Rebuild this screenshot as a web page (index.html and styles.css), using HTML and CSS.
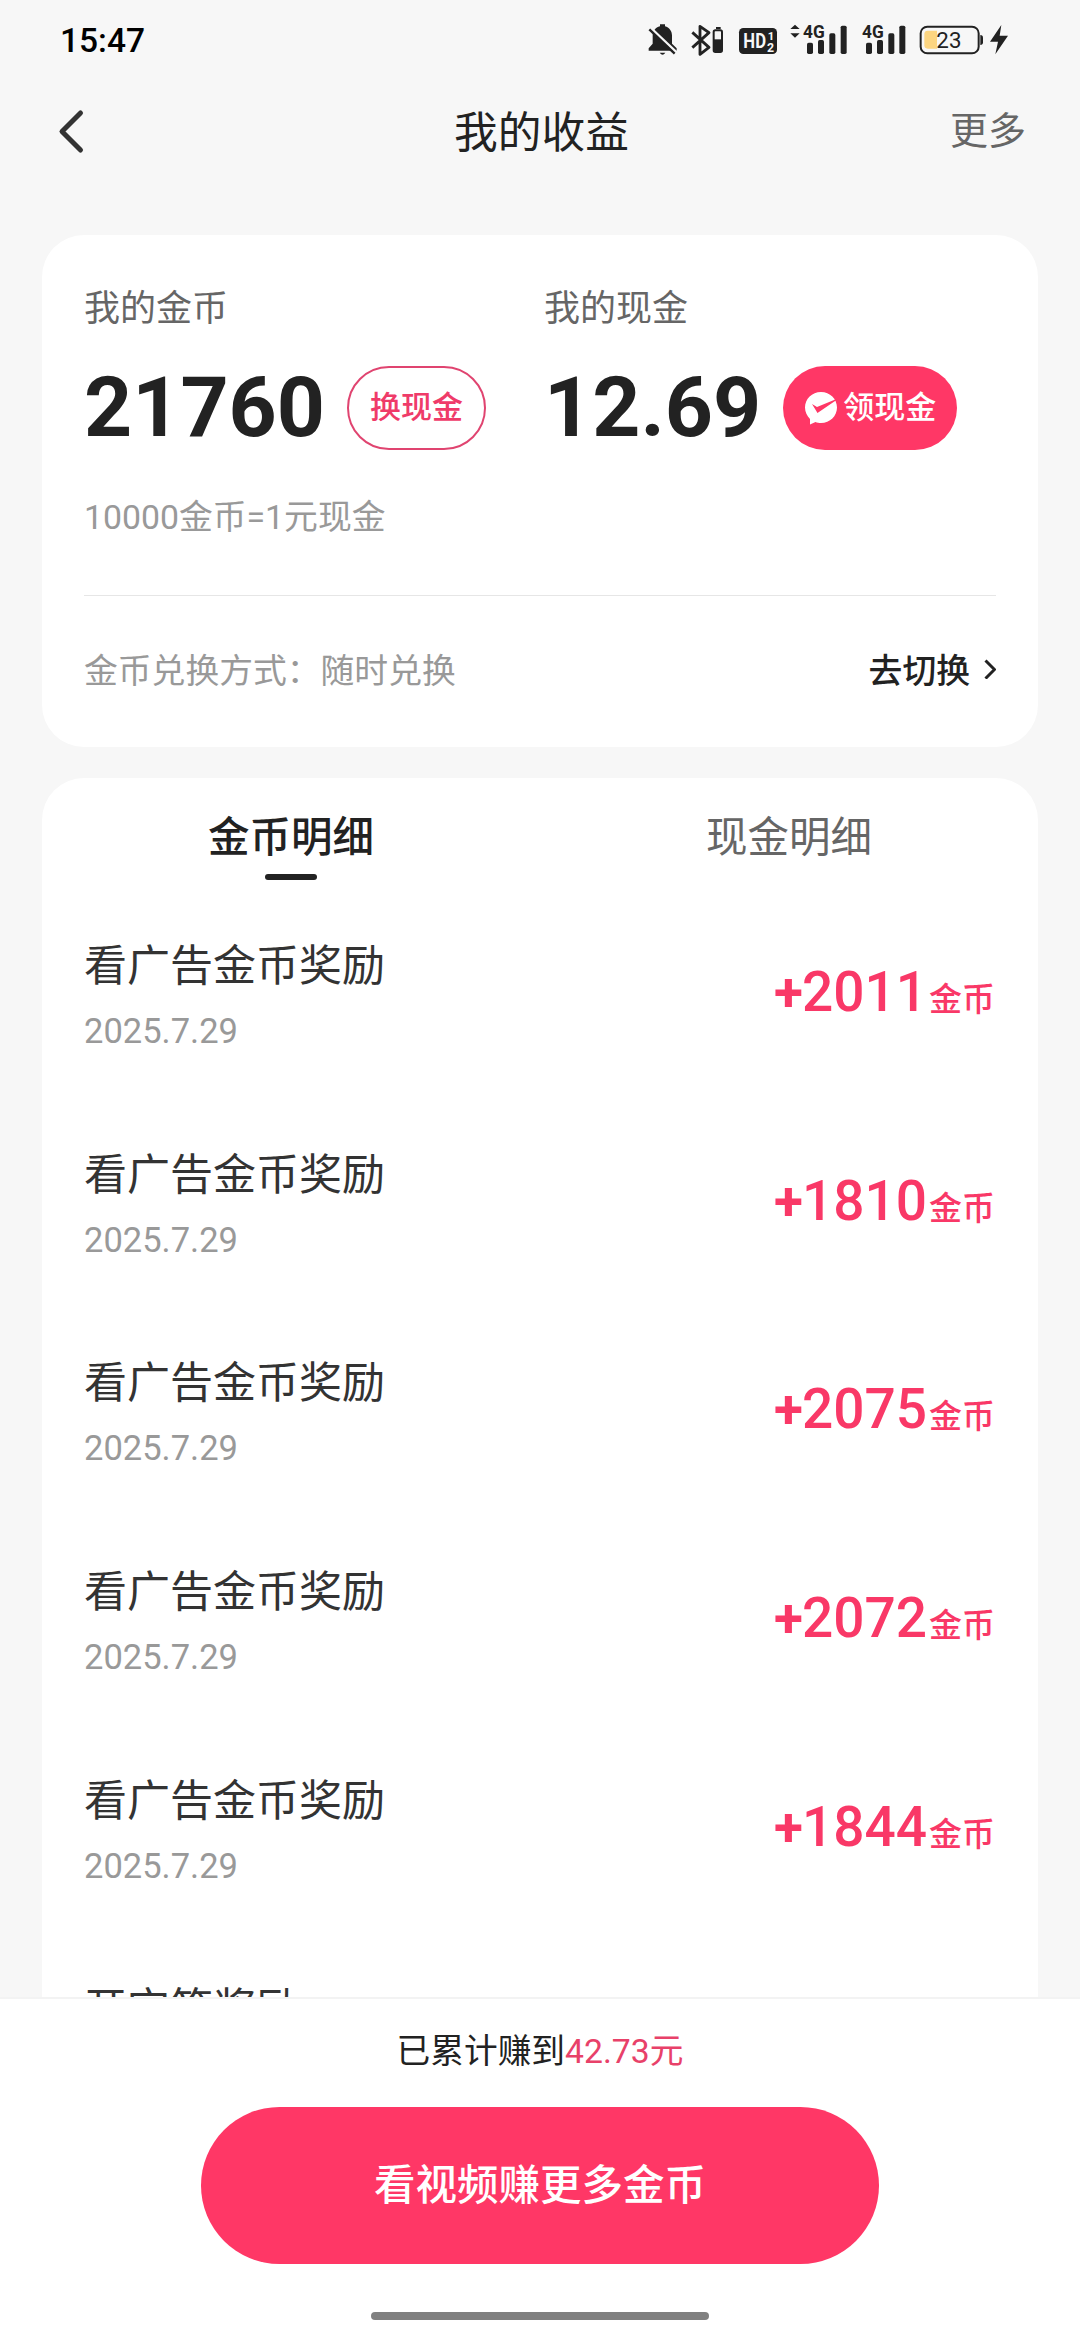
FILE: index.html
```html
<!DOCTYPE html>
<html lang="zh-CN">
<head>
<meta charset="utf-8">
<title>我的收益</title>
<link rel="stylesheet" href="styles.css">
</head>
<body>
<div class="screen">
  <div class="status">
    <span class="clock">15:47</span>
    <div class="tray">
      <svg width="38" height="40" viewBox="48 30 114 120"><path fill="#222" d="M90 43h15v6c13 4 21 14 21 28v24l14 14v7H56v-7l12-14V77c0-14 8-24 22-28zM89 128h17q-8 12-17 0z"/><path stroke="#f7f7f7" stroke-width="8" d="M58 50l80 76"/><path stroke="#222" stroke-width="7" d="M58 58l76 73"/></svg>
      <svg width="48" height="40" viewBox="162 30 144 120"><path fill="none" stroke="#222" stroke-width="8.500" stroke-linejoin="round" d="M187 67l50 45-27 21V49l27 19-50 45"/><path fill="#222" d="M258 51h14v6h-14z"/><rect x="251" y="61" width="25" height="65" rx="5" fill="none" stroke="#222" stroke-width="6"/><path fill="#222" d="M251 88h25v38h-25z"/></svg>
      <svg width="52" height="40" viewBox="306 30 156 120"><rect x="327" y="54" width="114" height="78" rx="13" fill="#222"/><g class="tray-text" fill="#f7f7f7"><text x="340" y="115" font-size="62" textLength="68" lengthAdjust="spacingAndGlyphs">HD</text><text x="413" y="90" font-size="34">1</text><text x="411" y="125" font-size="37">2</text></g></svg>
      <svg width="70" height="40" viewBox="462 30 210 120"><path fill="#222" d="M481 57l14-13 14 13zM481 70l14 13 14-13z"/><text class="tray-text" x="519" y="83" font-size="56" fill="#222" textLength="65" lengthAdjust="spacingAndGlyphs">4G</text><g fill="#222"><rect x="531" y="98" width="18" height="34" rx="5"/><rect x="564" y="90" width="18" height="42" rx="5"/><rect x="598" y="70" width="18" height="62" rx="5"/><rect x="632" y="47" width="18" height="85" rx="5"/></g></svg>
      <svg width="60" height="40" viewBox="672 30 180 120"><text class="tray-text" x="696" y="83" font-size="56" fill="#222" textLength="65" lengthAdjust="spacingAndGlyphs">4G</text><g fill="#222"><rect x="708" y="98" width="18" height="34" rx="5"/><rect x="741" y="90" width="18" height="42" rx="5"/><rect x="775" y="70" width="18" height="62" rx="5"/><rect x="808" y="47" width="18" height="85" rx="5"/></g></svg>
      <svg width="71" height="40" viewBox="852 30 213 120"><rect x="872" y="50" width="174" height="80" rx="20" fill="none" stroke="#222" stroke-width="6"/><path fill="#fcd581" d="M893 62h28v54h-28q-10 0-10-10V72q0-10 10-10z"/><path fill="#222" d="M1051 75q8 0 8 8v14q0 8-8 8z"/><text class="battery-text" x="919" y="115" font-size="67" fill="#222" textLength="76">23</text></svg>
      <svg width="24" height="40" viewBox="1065 30 72 120"><path fill="#222" d="M1114 45l-34 50h24l-8 38 38-56h-25z"/></svg>
    </div>
  </div>

  <header class="nav">
    <svg class="back" width="28" height="46" viewBox="0 0 28 46"><path fill="none" stroke="#333" stroke-width="5" stroke-linecap="round" stroke-linejoin="round" d="M23.500 4L5 22.500 23.500 41"/></svg>
    <h1 class="title">我的收益</h1>
    <span class="more">更多</span>
  </header>

  <main class="content">
    <section class="card balance">
      <div class="wallets">
        <div class="wallet">
          <span class="label">我的金币</span>
          <div class="amount-row"><strong class="amount">21760</strong><span class="pill outline">换现金</span></div>
        </div>
        <div class="wallet">
          <span class="label">我的现金</span>
          <div class="amount-row"><strong class="amount">12.69</strong><span class="pill solid"><svg width="34" height="34" viewBox="0 0 34 34"><path fill="#fff" d="M17 1c9 0 16 7 16 15.500S26 32 17 32c-2 0-4-.4-5.500-1L6 33.500V28C3 25 1 21 1 16.500 1 8 8 1 17 1z"/><path fill="#ff3766" d="M8 13l5 3 19.500-8v1L13.500 22z"/></svg>领现金</span></div>
        </div>
      </div>
      <p class="rate">10000金币=1元现金</p>
      <div class="exchange">
        <span>金币兑换方式：随时兑换</span>
        <span class="switch">去切换<svg width="13" height="22" viewBox="0 0 13 22"><path fill="none" stroke="#222" stroke-width="3" d="M2.500 3.500l9 9-9 9"/></svg></span>
      </div>
    </section>

    <section class="card records">
      <div class="tabs">
        <span class="tab active">金币明细</span>
        <span class="tab">现金明细</span>
      </div>
      <ul class="list">
        <li class="row"><div><div class="name">看广告金币奖励</div><div class="date">2025.7.29</div></div><div class="gain"><span><b>+</b>2011</span><small>金币</small></div></li>
        <li class="row"><div><div class="name">看广告金币奖励</div><div class="date">2025.7.29</div></div><div class="gain"><span><b>+</b>1810</span><small>金币</small></div></li>
        <li class="row"><div><div class="name">看广告金币奖励</div><div class="date">2025.7.29</div></div><div class="gain"><span><b>+</b>2075</span><small>金币</small></div></li>
        <li class="row"><div><div class="name">看广告金币奖励</div><div class="date">2025.7.29</div></div><div class="gain"><span><b>+</b>2072</span><small>金币</small></div></li>
        <li class="row"><div><div class="name">看广告金币奖励</div><div class="date">2025.7.29</div></div><div class="gain"><span><b>+</b>1844</span><small>金币</small></div></li>
        <li class="row"><div><div class="name">开宝箱奖励</div></div></li>
      </ul>
    </section>
  </main>

  <footer class="footer">
    <p class="total">已累计赚到<span>42.73元</span></p>
    <div class="cta">看视频赚更多金币</div>
    <div class="home-bar"></div>
  </footer>
</div>
</body>
</html>
```

FILE: styles.css
```css
* { box-sizing: border-box; margin: 0; padding: 0; }

body {
  font-family: Roboto, "Noto Sans CJK SC", sans-serif;
  color: #222;
  background: #f7f7f7;
}

svg { display: block; flex: none; }

.screen {
  display: flex;
  flex-direction: column;
  width: 1080px;
  height: 2340px;
  overflow: hidden;
}

.status {
  display: flex;
  justify-content: space-between;
  align-items: center;
  height: 80px;
  padding: 0 71px 0 60px;
  flex: none;
}
.clock { font-size: 33.500px; font-weight: 500; line-height: 40px; padding-top: 1px; color: #000; }
.tray { display: flex; }
.tray-text { font-family: Roboto, sans-serif; font-weight: 700; }
.battery-text { font-family: Roboto, sans-serif; }

.nav {
  display: grid;
  grid-template-columns: 1fr auto 1fr;
  align-items: center;
  height: 104px;
  padding: 0 54px 0 57px;
  flex: none;
}
.title { padding-top: 2px; font-size: 43.700px; font-weight: 400; line-height: 60px; }
.more { justify-self: end; padding-bottom: 3px; font-size: 38px; line-height: 52px; color: #666; }

.content {
  display: flex;
  flex-direction: column;
  gap: 31px;
  flex: 1;
  min-height: 0;
  padding: 51px 42px 0;
  overflow: hidden;
}
.card { flex: none; background: #fff; border-radius: 42px; }

.balance { height: 512px; padding: 47px 42px 0; }
.wallets { display: grid; grid-template-columns: 460px 1fr; }
.label { display: block; font-size: 36px; line-height: 54px; color: #666; }
.amount-row { display: flex; align-items: center; gap: 22px; height: 84px; margin-top: 30px; }
.amount { font-size: 84px; line-height: 84px; font-weight: 700; }
.pill {
  display: flex;
  align-items: center;
  justify-content: center;
  height: 84px;
  border-radius: 42px;
  font-size: 31px;
  line-height: 40px;
  font-weight: 500;
}
.outline { width: 139px; padding-bottom: 1px; border: 2px solid #e04470; color: #ef3b69; }
.solid { width: 174px; gap: 5px; padding-bottom: 1px; background: #ff3766; color: #fff; }
.rate { margin-top: 43px; font-size: 33.800px; line-height: 50px; color: #999; }
.exchange {
  display: flex;
  justify-content: space-between;
  align-items: center;
  height: 150px;
  margin-top: 52px;
  padding-bottom: 5px;
  border-top: 1px solid #e6e6e6;
  font-size: 33.800px;
  color: #999;
}
.switch { display: flex; align-items: center; gap: 13px; font-weight: 500; color: #222; }

.records { height: 1400px; }
.tabs { display: grid; grid-template-columns: 1fr 1fr; height: 103px; }
.tab {
  display: flex;
  flex-direction: column;
  align-items: center;
  padding-top: 30px;
  font-size: 41.500px;
  line-height: 60px;
  color: #666;
}
.active { font-weight: 500; color: #222; }
.active::after {
  content: "";
  width: 52px;
  height: 6px;
  margin-top: 6px;
  border-radius: 3px;
  background: #222;
}
.list { list-style: none; padding: 55px 43px 0 42px; }
.row { display: flex; justify-content: space-between; height: 208.700px; }
.name { font-size: 43px; line-height: 60px; color: #333; }
.date { margin-top: 9px; font-size: 34.500px; line-height: 52px; color: #999; }
.gain {
  display: flex;
  align-items: baseline;
  gap: 2px;
  padding-top: 24px;
  font-size: 55px;
  line-height: 64px;
  font-weight: 500;
  color: #f93867;
}
.gain b { margin-right: -1px; font-size: 53px; font-weight: 700; }
.gain small { padding-bottom: 1px; font-size: 33px; }

.footer {
  display: flex;
  flex-direction: column;
  align-items: center;
  height: 343px;
  flex: none;
  border-top: 2px solid #f3f3f3;
  background: #fff;
}
.total { margin-top: 28px; font-size: 33.700px; line-height: 50px; }
.total span { color: #e84169; }
.cta {
  width: 678px;
  height: 157px;
  margin-top: 30px;
  border-radius: 79px;
  background: #ff3766;
  color: #fff;
  font-size: 41.500px;
  font-weight: 500;
  line-height: 157px;
  text-align: center;
}
.home-bar { width: 338px; height: 8px; margin-top: 48px; border-radius: 4px; background: #808080; }
```
